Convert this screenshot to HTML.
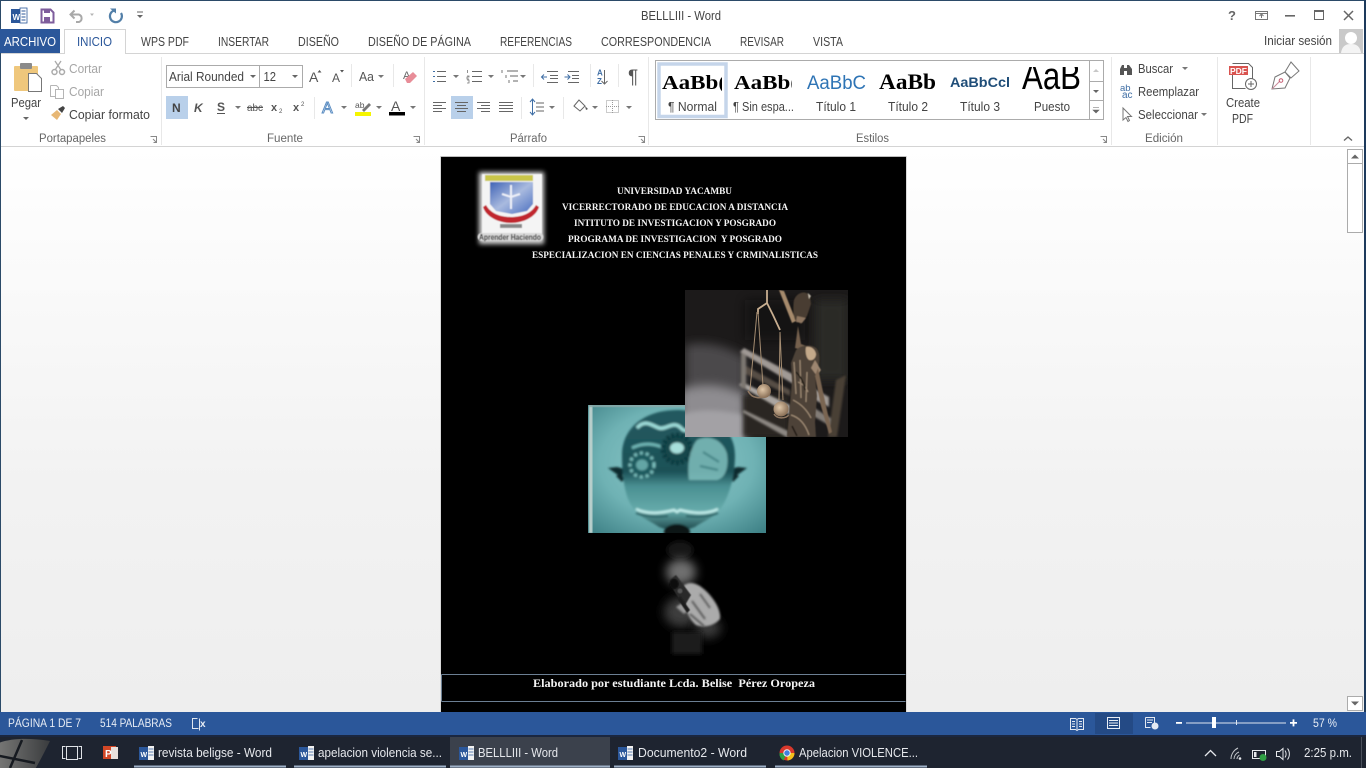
<!DOCTYPE html>
<html lang="es"><head><meta charset="utf-8"><title>BELLLIII - Word</title>
<style>
html,body{margin:0;padding:0;background:#fff;overflow:hidden}
svg.m{display:block;position:absolute;left:0;top:0;filter:blur(.3px)}
text{font-family:"Liberation Sans",sans-serif;font-size:12.5px;fill:#555;white-space:pre}
.t{fill:#444}.g{fill:#a6a6a6}.l{fill:#666;font-size:11.5px}.w{fill:#e8edf5;font-size:11.5px}
.b{fill:#e6e8ec;font-size:12.5px}
.d{font-family:"Liberation Serif",serif;font-weight:bold;fill:#f4f4f4;font-size:9.5px}
.i{fill:none;stroke:#666;stroke-width:1}
</style></head><body>
<svg class="m" width="1366" height="768" viewBox="0 0 1366 768" xmlns="http://www.w3.org/2000/svg">
<defs>
<linearGradient id="bg" x1="0" y1="0" x2="0" y2="1"><stop offset="0" stop-color="#fff"/><stop offset=".6" stop-color="#f2f2f2"/><stop offset="1" stop-color="#eeeeee"/></linearGradient>
<radialGradient id="teal" cx=".5" cy=".45" r=".72"><stop offset="0" stop-color="#8fcacb"/><stop offset=".6" stop-color="#6fb2b4"/><stop offset="1" stop-color="#3f8287"/></radialGradient>
<linearGradient id="head" x1="0" y1="0" x2="0" y2="1"><stop offset="0" stop-color="#235a60"/><stop offset=".5" stop-color="#1c5157"/><stop offset=".62" stop-color="#4a9092"/><stop offset=".82" stop-color="#66abab"/><stop offset="1" stop-color="#12393d"/></linearGradient>
<radialGradient id="ball" cx=".4" cy=".4" r=".6"><stop offset="0" stop-color="#e0c7a8"/><stop offset="1" stop-color="#8b7158"/></radialGradient>
<linearGradient id="orb" x1="0" y1="0" x2="1" y2="0"><stop offset="0" stop-color="#7c7c7a"/><stop offset="1" stop-color="#3a3c3e"/></linearGradient>
<linearGradient id="shield" x1="0" y1="0" x2="1" y2="1"><stop offset="0" stop-color="#3f63b5"/><stop offset=".5" stop-color="#a9badf"/><stop offset="1" stop-color="#4a6fc0"/></linearGradient>
<filter id="b1" x="-20%" y="-20%" width="140%" height="140%"><feGaussianBlur stdDeviation="1"/></filter>
<filter id="b2" x="-30%" y="-30%" width="160%" height="160%"><feGaussianBlur stdDeviation="2.5"/></filter>
<filter id="b3" x="-40%" y="-40%" width="180%" height="180%"><feGaussianBlur stdDeviation="5"/></filter>
<filter id="b4" x="-50%" y="-50%" width="200%" height="200%"><feGaussianBlur stdDeviation="9"/></filter>
<filter id="b05" x="-10%" y="-10%" width="120%" height="120%"><feGaussianBlur stdDeviation=".6"/></filter>
<clipPath id="jc"><rect x="685" y="290" width="163" height="147"/></clipPath>
<clipPath id="bc"><rect x="588" y="405" width="178" height="128"/></clipPath>
<clipPath id="tn"><rect x="660" y="66" width="62" height="30"/></clipPath>
<clipPath id="ts"><rect x="732" y="66" width="60" height="30"/></clipPath>
<clipPath id="tp"><rect x="1015" y="67" width="70" height="30"/></clipPath>
<clipPath id="orbc"><rect x="0" y="737" width="52" height="31"/></clipPath>
</defs>

<!-- chrome -->
<rect width="1366" height="768" fill="#fff"/>
<rect width="1366" height="1" fill="#2b4a68"/>
<rect x="0" y="0" width="1" height="735" fill="#2b4a68"/>
<rect x="1364" y="0" width="2" height="735" fill="#1d3a5c"/>
<rect x="1" y="53" width="1363" height="93" fill="#fff"/>
<rect x="1" y="146" width="1363" height="1" fill="#d4d4d4"/>
<rect x="1" y="147" width="1363" height="565" fill="url(#bg)"/>

<!-- QAT -->
<rect x="11" y="9" width="12" height="14" fill="#2b579a"/><rect x="20" y="8" width="7" height="15" fill="#fff" stroke="#2b579a" stroke-width=".8"/>
<path d="M21.5 11h4M21.5 14h4M21.5 17h4M21.5 20h4" stroke="#2b579a" stroke-width="1"/>
<text x="12.5" y="20" style="font-size:8px;font-weight:bold;fill:#fff">W</text>
<path d="M41.5 9.5h9l3 3v10h-12z" fill="#fff" stroke="#7e5d9c" stroke-width="2"/><rect x="44" y="9" width="6" height="4" fill="#7e5d9c"/><rect x="44" y="17" width="6" height="5" fill="#7e5d9c"/>
<path d="M71 14.5h8a4 4 0 0 1 0 7.5h-3M74.5 10.5l-4 4 4 4" fill="none" stroke="#a9a9a9" stroke-width="2"/>
<path d="M90 13.5l4 0-2 2.5z" fill="#b5b5b5"/>
<path d="M114 10.5a6 6 0 1 0 7 2.5" fill="none" stroke="#527fa8" stroke-width="2.2"/><path d="M110 8.5l6 0 0 5z" fill="#527fa8"/>
<path d="M137 12h6" stroke="#666"/><path d="M137 15l6 0-3 3z" fill="#666"/>
<text x="641" y="20" textLength="80" lengthAdjust="spacingAndGlyphs" style="fill:#444">BELLLIII - Word</text>
<!-- window controls -->
<text x="1228" y="20" style="font-weight:bold;font-size:13px;fill:#666">?</text>
<rect x="1255.5" y="11.5" width="12" height="8" fill="none" stroke="#777"/><path d="M1255 13.5h13M1261.5 18v-3M1259.5 16l2-2 2 2" fill="none" stroke="#777"/>
<rect x="1285" y="15" width="10" height="1.6" fill="#666"/>
<rect x="1314.5" y="10.5" width="9" height="9" fill="none" stroke="#666"/><rect x="1314" y="10" width="10" height="2" fill="#666"/>
<path d="M1344 11l9 9M1353 11l-9 9" stroke="#666" stroke-width="1.5"/>

<!-- tabs -->
<rect x="0" y="29" width="60" height="24" fill="#2b579a"/>
<text x="4" y="46" textLength="52" lengthAdjust="spacingAndGlyphs" style="fill:#fff">ARCHIVO</text>
<path d="M1 53.5h63.5v-24h61v24H1364" fill="#fff" stroke="#d4d4d4"/>
<text x="77" y="46" textLength="35" lengthAdjust="spacingAndGlyphs" style="fill:#2b579a">INICIO</text>
<text class="t" x="141" y="46" textLength="48" lengthAdjust="spacingAndGlyphs">WPS PDF</text>
<text class="t" x="218" y="46" textLength="51" lengthAdjust="spacingAndGlyphs">INSERTAR</text>
<text class="t" x="298" y="46" textLength="41" lengthAdjust="spacingAndGlyphs">DISEÑO</text>
<text class="t" x="368" y="46" textLength="103" lengthAdjust="spacingAndGlyphs">DISEÑO DE PÁGINA</text>
<text class="t" x="500" y="46" textLength="72" lengthAdjust="spacingAndGlyphs">REFERENCIAS</text>
<text class="t" x="601" y="46" textLength="110" lengthAdjust="spacingAndGlyphs">CORRESPONDENCIA</text>
<text class="t" x="740" y="46" textLength="44" lengthAdjust="spacingAndGlyphs">REVISAR</text>
<text class="t" x="813" y="46" textLength="30" lengthAdjust="spacingAndGlyphs">VISTA</text>
<text class="t" x="1264" y="45" textLength="68" lengthAdjust="spacingAndGlyphs">Iniciar sesión</text>
<rect x="1339" y="29" width="24" height="24" fill="#c9c9c9"/><circle cx="1351" cy="38" r="6" fill="#fff"/><path d="M1341 53c1-7 5-9 10-9s9 2 10 9z" fill="#f4f4f4"/>

<!-- group separators -->
<path d="M161.5 57v88M424.5 57v88M648.5 57v88M1111.5 57v88M1217.5 57v88M1310.5 57v88" stroke="#e8e8e8"/>

<!-- clipboard -->
<rect x="14" y="66" width="24" height="25" rx="1" fill="#efc77c"/><rect x="20" y="63" width="12" height="6" rx="1" fill="#8a8a8a"/>
<path d="M28.5 73.5h8l5 5v13h-13z" fill="#fff" stroke="#777"/>
<text x="11" y="107" textLength="30" lengthAdjust="spacingAndGlyphs" class="t">Pegar</text>
<path d="M23 117h6l-3 3z" fill="#666"/>
<circle cx="54.5" cy="72" r="2.5" fill="none" stroke="#aaa" stroke-width="1.5"/><circle cx="62" cy="72" r="2.5" fill="none" stroke="#aaa" stroke-width="1.5"/><path d="M55 70l6-9M61 70l-6-9" stroke="#aaa" stroke-width="1.3"/>
<text class="g" x="69" y="73" textLength="33" lengthAdjust="spacingAndGlyphs">Cortar</text>
<path d="M50.5 85.5h6l2 2v3M50.5 85.5v11h5" fill="none" stroke="#b5b5b5"/><rect x="55.5" y="89.5" width="8" height="9" fill="#fff" stroke="#b5b5b5"/>
<text class="g" x="69" y="96" textLength="35" lengthAdjust="spacingAndGlyphs">Copiar</text>
<path d="M51 115l6-5 4 4-4 6z" fill="#e7b775"/><path d="M58 109l5-3 2 2-3 5z" fill="#444"/>
<text class="t" x="69" y="119" textLength="81" lengthAdjust="spacingAndGlyphs">Copiar formato</text>
<text class="l" x="39" y="142" textLength="67" lengthAdjust="spacingAndGlyphs">Portapapeles</text>
<path d="M150.5 136.5h6v6h-3M153 139l3.5 3.5" fill="none" stroke="#888"/>

<!-- font -->
<rect x="166.5" y="65.5" width="93" height="22" fill="#fff" stroke="#ababab"/><rect x="259.5" y="65.5" width="43" height="22" fill="#fff" stroke="#ababab"/>
<text class="t" x="169" y="81" textLength="75" lengthAdjust="spacingAndGlyphs">Arial Rounded</text>
<path d="M250 75h6l-3 3z" fill="#666"/>
<text class="t" x="263.5" y="81" textLength="12.5" lengthAdjust="spacingAndGlyphs">12</text>
<path d="M292 75h6l-3 3z" fill="#666"/>
<text x="309" y="82" style="font-size:14px;fill:#555">A</text><path d="M317.5 72.5l2-2.5 2 2.5z" fill="#555"/>
<text x="332" y="82" style="font-size:12px;fill:#555">A</text><path d="M340 70h4l-2 2.5z" fill="#555"/>
<path d="M351.5 64v23" stroke="#e8e8e8"/>
<text x="359" y="81" textLength="15" lengthAdjust="spacingAndGlyphs" style="font-size:13px;fill:#555">Aa</text><path d="M378 75h6l-3 3z" fill="#777"/>
<path d="M393.5 64v23" stroke="#e8e8e8"/>
<text x="403" y="79" style="font-size:11px;fill:#666">A</text><path d="M405 79l8-7 4 4-7 7h-3z" fill="#e88d98"/>

<rect x="166" y="96" width="22" height="23" fill="#b9d0ea"/>
<text x="172" y="112" style="font-weight:bold;font-size:12px;fill:#444">N</text>
<text x="194" y="112" style="font-weight:bold;font-style:italic;font-size:12px;fill:#555">K</text>
<text x="217" y="111" style="font-weight:bold;font-size:12px;fill:#555">S</text><rect x="217" y="113" width="8" height="1" fill="#555"/>
<path d="M235 106h6l-3 3z" fill="#777"/>
<text x="247" y="111" textLength="16" lengthAdjust="spacingAndGlyphs" style="font-size:10.5px;fill:#555">abc</text><rect x="247" y="107" width="16" height="1" fill="#555"/>
<text x="271" y="111" style="font-size:11px;font-weight:bold;fill:#555">x</text><text x="279" y="113" style="font-size:6px;fill:#555">2</text>
<text x="293" y="111" style="font-size:11px;font-weight:bold;fill:#555">x</text><text x="301" y="106" style="font-size:6px;fill:#555">2</text>
<path d="M314.5 97v22" stroke="#e8e8e8"/>
<text x="322" y="113" style="font-size:16px;fill:#fff;stroke:#5b8dc2;stroke-width:1">A</text><path d="M341 106h6l-3 3z" fill="#777"/>
<text x="355" y="108" style="font-size:8.5px;fill:#555">ab</text><path d="M362 110l7-7 2 2-7 7z" fill="#777"/><rect x="355" y="112" width="16" height="4" fill="#f5f500"/>
<path d="M376 106h6l-3 3z" fill="#777"/>
<text x="391" y="111" style="font-size:14px;fill:#555">A</text><rect x="389" y="112" width="16" height="3.5" fill="#000"/>
<path d="M410 106h6l-3 3z" fill="#777"/>
<text class="l" x="267" y="142" textLength="36" lengthAdjust="spacingAndGlyphs">Fuente</text>
<path d="M413.500 136.500h6v6h-3M416 139l3.500 3.500" fill="none" stroke="#888"/>

<!-- paragraph -->
<g stroke="#666" fill="none">
<path d="M437 71.500h9M437 76.500h9M437 81.500h9"/><path d="M433 71.500h2M433 76.500h2M433 81.500h2" stroke="#3f6ea5"/>
<path d="M472 71.500h10M472 76.500h10M472 81.500h10"/><path d="M467.500 70v3M467 76h2v1h-2v2h2M467 80h2v3h-2" stroke="#777" stroke-width=".8"/>
<path d="M507 71h11M510 76h8M513 81h5"/><path d="M502 70v3M506 75v3M509 80v3" stroke="#777"/>
<path d="M547 71.500h11M550 75.500h8M550 78.500h8M547 82.500h11"/><path d="M568 71.500h11M572 75.500h7M572 78.500h7M568 82.500h11"/>
<path d="M604.500 70v14M601.500 81l3 3 3-3"/>
</g>
<path d="M547 77h-5m2-2.500l-2.500 2.500 2.500 2.500" fill="none" stroke="#3f6ea5"/><path d="M564.500 77h5m-2-2.500l2.500 2.500-2.500 2.500" fill="none" stroke="#3f6ea5"/>
<path d="M453 75h6l-3 3zM488 75h6l-3 3zM520 75h6l-3 3z" fill="#777"/>
<path d="M533.500 64v23M590.500 64v23M618.500 64v23" stroke="#e8e8e8"/>
<text x="597" y="75.500" style="font-size:8px;font-weight:bold;fill:#3f6ea5">A</text><text x="597" y="84" style="font-size:8px;font-weight:bold;fill:#3f6ea5">Z</text>
<text x="628" y="83" style="font-size:19px;fill:#555">¶</text>
<g fill="none" stroke="#666">
<path d="M433 102.500h13M433 105.500h9M433 108.500h13M433 111.500h9"/>
</g>
<rect x="451" y="96" width="22" height="23" fill="#b9d0ea"/>
<g fill="none" stroke="#666">
<path d="M455 102.500h13M457 105.500h9M455 108.500h13M457 111.500h9"/>
<path d="M477 102.500h13M481 105.500h9M477 108.500h13M481 111.500h9"/>
<path d="M499 102.500h14M499 105.500h14M499 108.500h14M499 111.500h14"/>
<path d="M521.500 97v22M563.500 97v22" stroke="#e8e8e8"/>
<path d="M536 103h8M536 107h8M536 111h8"/>
</g>
<path d="M532.500 100v14" stroke="#3f6ea5"/><path d="M530 102l2.500-3 2.500 3M530 112l2.500 3 2.500-3" fill="none" stroke="#3f6ea5"/>
<path d="M549 106h6l-3 3z" fill="#777"/>
<path d="M574 106l5-6 6 6-5 5z" fill="#fff" stroke="#666"/><path d="M585 106l3 3-2 1z" fill="#555"/>
<path d="M592 106h6l-3 3z" fill="#777"/>
<rect x="606.500" y="100.500" width="12" height="12" fill="none" stroke="#999" stroke-dasharray="1 1"/><path d="M612.500 100v13M606 106.500h13" stroke="#999" stroke-dasharray="1 1"/>
<path d="M626 106h6l-3 3z" fill="#777"/>
<text class="l" x="510" y="142" textLength="37" lengthAdjust="spacingAndGlyphs">Párrafo</text>
<path d="M638.500 136.500h6v6h-3M641 139l3.500 3.500" fill="none" stroke="#888"/>

<!-- styles -->
<rect x="655.500" y="60.500" width="448" height="59" fill="#fff" stroke="#ababab"/>
<rect x="659" y="64" width="67" height="52.500" fill="#fff" stroke="#c5d5ea" stroke-width="3.500"/>
<g clip-path="url(#tn)"><text x="662" y="89" textLength="64" lengthAdjust="spacingAndGlyphs" style="font-family:'Liberation Serif',serif;font-weight:bold;font-size:20px;fill:#000">AaBb(</text></g>
<g clip-path="url(#ts)"><text x="734" y="89" textLength="64" lengthAdjust="spacingAndGlyphs" style="font-family:'Liberation Serif',serif;font-weight:bold;font-size:20px;fill:#000">AaBb(</text></g>
<text x="807" y="89" textLength="59" lengthAdjust="spacingAndGlyphs" style="font-size:19px;fill:#2e74b5">AaBbC</text>
<text x="879" y="89" textLength="57" lengthAdjust="spacingAndGlyphs" style="font-family:'Liberation Serif',serif;font-weight:bold;font-size:22px;fill:#000">AaBb</text>
<text x="950" y="87" textLength="60" lengthAdjust="spacingAndGlyphs" style="font-size:14px;font-weight:bold;fill:#1f4d78">AaBbCcl</text>
<g clip-path="url(#tp)"><text x="1022" y="89" textLength="59" lengthAdjust="spacingAndGlyphs" style="font-size:38px;fill:#000">AaB</text></g>
<text class="t" x="668" y="111" textLength="49" lengthAdjust="spacingAndGlyphs">¶ Normal</text>
<text class="t" x="733" y="111" textLength="61" lengthAdjust="spacingAndGlyphs">¶ Sin espa...</text>
<text class="t" x="816" y="111" textLength="40" lengthAdjust="spacingAndGlyphs">Título 1</text>
<text class="t" x="888" y="111" textLength="40" lengthAdjust="spacingAndGlyphs">Título 2</text>
<text class="t" x="960" y="111" textLength="40" lengthAdjust="spacingAndGlyphs">Título 3</text>
<text class="t" x="1034" y="111" textLength="36" lengthAdjust="spacingAndGlyphs">Puesto</text>
<path d="M1089.500 60v60M1089.500 81.500h14M1089.500 100.500h14" stroke="#ababab" fill="none"/>
<path d="M1093 72l3-3 3 3z" fill="#c8c8c8"/><path d="M1093 90h6l-3 3z" fill="#666"/><path d="M1093 107.500h6M1093 110h6l-3 3z" fill="#666" stroke="#666" stroke-width=".6"/>
<text class="l" x="856" y="142" textLength="33" lengthAdjust="spacingAndGlyphs">Estilos</text>
<path d="M1100.500 136.500h6v6h-3M1103 139l3.500 3.500" fill="none" stroke="#888"/>

<!-- editing -->
<path d="M1120 75v-6l2-4h2v10zM1127 75v-10h2l3 4v6zM1124 68h3v3h-3z" fill="#555"/>
<text class="t" x="1138" y="73" textLength="35" lengthAdjust="spacingAndGlyphs">Buscar</text><path d="M1182 67h6l-3 3z" fill="#777"/>
<text x="1120" y="91" style="font-size:9.500px;fill:#3f6ea5">ab</text><text x="1122" y="98" style="font-size:10px;fill:#3f6ea5">ac</text>
<text class="t" x="1138" y="96" textLength="61" lengthAdjust="spacingAndGlyphs">Reemplazar</text>
<path d="M1123 108v12l3-2.500 2 4 1.500-1-2-4h4z" fill="#fff" stroke="#777"/>
<text class="t" x="1138" y="119" textLength="60" lengthAdjust="spacingAndGlyphs">Seleccionar</text><path d="M1201 113h6l-3 3z" fill="#777"/>
<text class="l" x="1145" y="142" textLength="38" lengthAdjust="spacingAndGlyphs">Edición</text>

<!-- PDF -->
<path d="M1232.500 63.500h16l4 4v15M1232.500 75v13.500h13" fill="none" stroke="#666"/>
<rect x="1229" y="66" width="19" height="9" fill="#d9534f"/><text x="1230" y="74" style="font-size:8px;fill:#fff;font-weight:bold" textLength="17" lengthAdjust="spacingAndGlyphs">PDF</text>
<circle cx="1251" cy="84" r="5.500" fill="#fff" stroke="#666"/><path d="M1251 81v6M1248 84h6" stroke="#666"/>
<text class="t" x="1226" y="107" textLength="34" lengthAdjust="spacingAndGlyphs">Create</text>
<text class="t" x="1232" y="123" textLength="21" lengthAdjust="spacingAndGlyphs">PDF</text>
<path d="M1272 89l3-12 10-5 5 6-5 10z" fill="#fff" stroke="#777"/><path d="M1285 72l6-10 8 9-8 7z" fill="#fff" stroke="#777"/>
<path d="M1272 89l8-8" stroke="#c98a9a"/><circle cx="1281" cy="80.500" r="1.800" fill="none" stroke="#c55a70"/>
<path d="M1344 140.500l4-3.500 4 3.500" fill="none" stroke="#666" stroke-width="1.400"/>

<!-- scrollbar -->
<rect x="1347.500" y="149.500" width="15" height="14" fill="#fff" stroke="#ababab"/>
<path d="M1351 158.500l4-4 4 4z" fill="#666"/>
<rect x="1347.500" y="163.500" width="15" height="69" fill="#fff" stroke="#ababab"/>
<rect x="1347.500" y="696.500" width="15" height="14" fill="#fff" stroke="#ababab"/>
<path d="M1351 701.500h8l-4 4z" fill="#666"/>

<!-- page -->
<rect x="440" y="156" width="467" height="1" fill="#bdbdbd"/>
<rect x="440" y="156" width="1" height="556" fill="#d9d9d9"/><rect x="906" y="156" width="1" height="556" fill="#d9d9d9"/>
<rect x="441" y="157" width="465" height="555" fill="#000"/>

<!-- logo -->
<g filter="url(#b05)">
<rect x="479" y="172" width="65" height="72" fill="#fff" filter="url(#b2)" opacity=".85"/>
<rect x="482" y="174" width="60" height="66" fill="#f4f4f4"/>
<rect x="485" y="175" width="48" height="6" fill="#c9c64a"/>
<path d="M490 182h43v22l-6 7-15 3-16-3-6-7z" fill="url(#shield)"/>
<path d="M511 185v24M502 194l9 3 9-3" stroke="#eef0f8" stroke-width="2" fill="none"/>
<path d="M483 207c3 10 16 16 28 16s25-6 28-16l-3-2c-5 9-15 12-25 12s-20-3-25-12z" fill="#c1272d"/>
<rect x="500" y="224" width="22" height="4" fill="#888"/>
<rect x="477.500" y="233" width="66" height="8" rx="4" fill="#d8d8d8"/>
<text x="479" y="240" textLength="62" lengthAdjust="spacingAndGlyphs" style="font-size:8px;font-weight:bold;fill:#222">Aprender Haciendo</text>
</g>

<!-- header text -->
<text class="d" x="617" y="194" textLength="115" lengthAdjust="spacingAndGlyphs">UNIVERSIDAD YACAMBU</text>
<text class="d" x="562" y="210" textLength="226" lengthAdjust="spacingAndGlyphs">VICERRECTORADO DE EDUCACION A DISTANCIA</text>
<text class="d" x="574" y="226" textLength="202" lengthAdjust="spacingAndGlyphs">INTITUTO DE INVESTIGACION Y POSGRADO</text>
<text class="d" x="568" y="242" textLength="214" lengthAdjust="spacingAndGlyphs">PROGRAMA DE INVESTIGACION  Y POSGRADO</text>
<text class="d" x="532" y="258" textLength="286" lengthAdjust="spacingAndGlyphs">ESPECIALIZACION EN CIENCIAS PENALES Y CRMINALISTICAS</text>

<!-- brain -->
<g clip-path="url(#bc)">
<rect x="588" y="405" width="178" height="128" fill="url(#teal)"/>
<rect x="589" y="405" width="3.500" height="128" fill="#b9cfcc" filter="url(#b05)"/>
<rect x="589" y="405" width="177" height="2" fill="#8aa9a8" filter="url(#b05)"/>
<g filter="url(#b1)">
<path d="M622 478l-14-10 9-1 7 2zM733 478l14-10-9-1-7 2z" fill="#0e2a2e"/>
<path d="M622 482l-6-6 4-2 5 4zM733 482l6-6-4-2-5 4z" fill="#0e2a2e"/>
<path d="M622 455c0-28 24-45 55-45s58 17 58 45c0 22-6 40-12 50-6 12-20 16-28 22l-18 6-18-6c-8-6-22-10-28-22-6-10-9-28-9-50z" fill="url(#head)"/>
<path d="M637 428c8-9 14-3 22 0 8 2 14-8 22 0 6 8 16-6 26 3" fill="none" stroke="#9ddbd8" stroke-width="3.500"/>
<path d="M632 448c12-6 22-4 30-1" fill="none" stroke="#6fb6b5" stroke-width="3"/>
<circle cx="677" cy="449" r="14" fill="#13474c" stroke="#0f3a3f" stroke-width="5" stroke-dasharray="3 2"/>
<ellipse cx="677" cy="448" rx="7" ry="5.500" fill="#a7dfdb"/>
<circle cx="642" cy="465" r="12" fill="#1f5a5e" stroke="#7cc0be" stroke-width="3" stroke-dasharray="3 3"/>
<ellipse cx="642" cy="465" rx="6" ry="5.500" fill="#64a5a5"/>
<path d="M697 440c12-6 26 0 30 14 2 14-2 24-10 26h-28c-2-14 0-30 8-40z" fill="#86c5c3" opacity=".8"/>
<path d="M703 452l16 10M700 466l18 4" stroke="#2e6d70" stroke-width="2" opacity=".7"/>
<path d="M636 509c12 6 26 4 38 1l3 2 3-2c12 3 26 5 38-1" fill="none" stroke="#c4efec" stroke-width="2.500"/>
<path d="M636 513c12 5 24 4 32 3M718 513c-12 5-24 4-32 3" fill="none" stroke="#1b4f53" stroke-width="1.500"/>
<ellipse cx="677" cy="532" rx="13" ry="8" fill="#0a1517"/>
</g>
</g>

<!-- gun -->
<g>
<ellipse cx="680" cy="550" rx="13" ry="9" fill="#141414" filter="url(#b2)"/>
<ellipse cx="681" cy="572" rx="15" ry="13" fill="#707070" filter="url(#b3)"/>
<ellipse cx="681" cy="612" rx="17" ry="15" fill="#3c3c3c" filter="url(#b3)"/>
<ellipse cx="708" cy="628" rx="13" ry="10" fill="#3a3a3a" filter="url(#b3)"/>
<rect x="672" y="632" width="30" height="22" fill="#1a1a1a" filter="url(#b2)"/>
<g filter="url(#b1)">
<path d="M683 586c8-7 18-1 26 8 8 9 12 18 11 25-6 7-16 9-24 6-9-7-14-24-13-39z" fill="#ababab"/>
<path d="M676 607l8 7 4-3-6-8z" fill="#9a9a9a"/>
</g>
<path d="M700 594l10 14M692 601l13 18M690 614l14 12" stroke="#444" stroke-width="1.500" filter="url(#b1)"/>
<path d="M668 581l8-6 15 20-7 12z" fill="#2b2b2b" filter="url(#b05)"/>
<path d="M680 596l10 14-3 3-9-14z" fill="#1d1d1d" filter="url(#b05)"/>
<ellipse cx="674" cy="584" rx="4.500" ry="5" fill="#070707" filter="url(#b05)"/>
<circle cx="680" cy="591" r="2.500" fill="#555" filter="url(#b05)"/>
</g>

<!-- justice -->
<g clip-path="url(#jc)">
<rect x="685" y="290" width="163" height="147" fill="#1c1a1a"/>
<path d="M685 345c20-4 40 0 60 12v80h-60z" fill="#4c4a4c" filter="url(#b3)"/>
<path d="M680 390c24-8 40-6 65 4l2 50h-67z" fill="#8e8c90" filter="url(#b3)"/>
<path d="M680 415c24-8 44-4 65 0v30h-65z" fill="#a3a1a5" filter="url(#b2)"/>
<rect x="745" y="300" width="60" height="40" fill="#111" opacity=".5" filter="url(#b3)"/>
<rect x="815" y="300" width="33" height="80" fill="#2c2926" filter="url(#b3)"/>
<!-- books -->
<path d="M743 395h45v42h-45z" fill="#2b2623" filter="url(#b2)"/>
<g filter="url(#b1)">
<path d="M740 352l4-4 56 30v10z" fill="#a09a95"/>
<path d="M739 385l3-3 48 23v10z" fill="#aba6a1"/>
<path d="M742 412l2-2 44 21v7z" fill="#8c8782"/>
<path d="M741 352v36l5 1v-34z" fill="#7d7771"/>
<path d="M746 366l44 24v6l-44-22z" fill="#564d45"/>
<path d="M809 386l20 11v10l-20-10z" fill="#a09a95"/>
<path d="M808 404l24 15v8l-24-14z" fill="#837d77"/>
<path d="M836 380l-8 57h9l9-62z" fill="#4a4036"/>
</g>
<!-- scale -->
<path d="M767 290v13M767 303l-9 6 0 5M767 303l6 12 7 15" fill="none" stroke="#c8ae90" stroke-width="1.800"/>
<path d="M758 312l5 74M757 312l-7 78M780 332l-1 68M780 332l3 68" fill="none" stroke="#a58d72" stroke-width="1"/>
<path d="M748 391c4 8 14 9 20 2" fill="none" stroke="#8e7660" stroke-width="1.500"/>
<circle cx="764" cy="391" r="7" fill="url(#ball)"/>
<circle cx="781" cy="409" r="7.500" fill="url(#ball)"/>
<path d="M774 414c3 5 11 5 15 1" fill="none" stroke="#8e7660" stroke-width="1.500"/>
<!-- statue -->
<g filter="url(#b05)">
<path d="M779 290l5 1 12 30-4 2z" fill="#a68a6c"/>
<path d="M794 300c3-8 12-10 16-4l1 8-4 12-6 8-6-4c-2-6-2-14-1-20z" fill="#4a3d31"/>
<path d="M808 293l3 3-2 3z" fill="#c8c0b0"/>
<path d="M797 316l9 2-4 5-6-1z" fill="#8e7660"/>
<path d="M798 326l3 18 8 3-7 3-7-2z" fill="#75614e"/>
<path d="M796 350c5-5 15-6 20-2 4 4 4 12 2 20l-3 8 2 20-2 26 1 15h-29l3-32 2-24-1-18z" fill="#4e4237"/>
<path d="M806 347c5-1 9 2 10 7 0 4-3 7-7 6-3-2-4-9-3-13z" fill="#c4a98a"/>
<path d="M815 360l6 10-4 6-6-8z" fill="#9d8670"/>
<path d="M818 368l8 38 6 26-3 2-8-28-6-30z" fill="#7a6551"/>
<path d="M794 362l2 32M800 360l1 38M807 372l-1 30M793 400c8 4 14 10 18 18M791 415c7 2 14 8 18 20M798 382c5 2 8 5 10 10" fill="none" stroke="#9e8a74" stroke-width="1.200"/>
<path d="M796 372c4 4 8 10 9 18M792 426l5 10" fill="none" stroke="#1f1a15" stroke-width="1.500"/>
</g>
</g>

<!-- footer table -->
<path d="M441.500 674.500h464M441.500 701.500h464M441.500 674.500v27" stroke="#6c7f93" fill="none"/>
<text class="d" x="533" y="687" textLength="282" lengthAdjust="spacingAndGlyphs" style="font-size:12px">Elaborado por estudiante Lcda. Belise  Pérez Oropeza</text>

<!-- status bar -->
<rect x="0" y="712" width="1366" height="23" fill="#2b579a"/>
<text class="w" x="8" y="727" textLength="73" lengthAdjust="spacingAndGlyphs">PÁGINA 1 DE 7</text>
<text class="w" x="100" y="727" textLength="72" lengthAdjust="spacingAndGlyphs">514 PALABRAS</text>
<path d="M197.500 718.500h-5v10h6M199.500 718.500v12" fill="none" stroke="#dfe6f0"/>
<text x="200" y="727" style="font-size:10px;font-weight:bold;fill:#e8edf5">x</text>
<path d="M1070.500 718.500h5l1.500 1 1.500-1h5v11h-5l-1.500 1-1.500-1h-5zM1077 719.500v10M1072 721.500h3M1072 724h3M1072 726.500h3M1079 721.500h3M1079 724h3M1079 726.500h3" fill="none" stroke="#e4e9f2"/>
<rect x="1095" y="713" width="38" height="21" fill="#244a85"/>
<rect x="1107.500" y="717.500" width="12" height="11" fill="none" stroke="#e8edf5"/><path d="M1109 720.500h9M1109 723h9M1109 725.500h9" stroke="#e8edf5"/>
<path d="M1145.500 717.500h9v6M1145.500 717.500v10h5M1147 720h6M1147 722.500h5" fill="none" stroke="#e4e9f2"/><circle cx="1155" cy="726" r="3.500" fill="#e4e9f2"/>
<rect x="1176" y="722" width="6" height="1.800" fill="#fff"/>
<rect x="1186" y="722.500" width="100" height="1" fill="#dfe6f0"/><rect x="1236" y="720" width="1" height="5" fill="#dfe6f0"/>
<rect x="1212" y="717" width="4" height="11" fill="#fff"/>
<path d="M1290 722.900h7M1293.500 719.400v7" stroke="#fff" stroke-width="1.800"/>
<text class="w" x="1313" y="727" textLength="24" lengthAdjust="spacingAndGlyphs">57 %</text>

<!-- taskbar -->
<rect x="0" y="735" width="1366" height="33" fill="#1e2430"/>
<rect x="0" y="735" width="1366" height="2" fill="#1b2740"/>
<g clip-path="url(#orbc)">
<path d="M-6 745c12-6 30-8 56-4-5 10-10 20-16 30H-6z" fill="url(#orb)"/>
<path d="M22 740L10 768M-5 755l40 8" stroke="#161a20" stroke-width="2.500"/>
</g>
<path d="M65.500 746.500h-3v12h3M78.500 746.500h3v12h-3" fill="none" stroke="#dfe2e6"/><rect x="66.500" y="746.500" width="11" height="13" fill="none" stroke="#dfe2e6"/>
<rect x="103" y="746" width="13" height="13" fill="#d24726"/><rect x="111" y="747" width="7" height="12" fill="#e8e0dc"/>
<text x="105" y="757" style="font-size:10px;font-weight:bold;fill:#fff">P</text>

<rect x="450" y="737" width="160" height="31" fill="#3b414c"/>
<path d="M134 766.500h152M294 766.500h152M450 766.500h160M614 766.500h152M775 766.500h152" stroke="#9fb1c7" stroke-width="2" fill="none"/>

<rect x="139" y="747" width="11" height="13" fill="#2b579a"/><rect x="148" y="746" width="6" height="14" fill="#f2f2f2"/><path d="M148.500 749h5M148.500 752h5M148.500 755h5" stroke="#2b579a" stroke-width=".8"/><text x="140.500" y="757" style="font-size:7px;font-weight:bold;fill:#fff">W</text>
<text class="b" x="158" y="757" textLength="114" lengthAdjust="spacingAndGlyphs">revista beligse - Word</text>
<rect x="299" y="747" width="11" height="13" fill="#2b579a"/><rect x="308" y="746" width="6" height="14" fill="#f2f2f2"/><path d="M308.500 749h5M308.500 752h5M308.500 755h5" stroke="#2b579a" stroke-width=".8"/><text x="300.500" y="757" style="font-size:7px;font-weight:bold;fill:#fff">W</text>
<text class="b" x="318" y="757" textLength="124" lengthAdjust="spacingAndGlyphs">apelacion violencia se...</text>
<rect x="459" y="747" width="11" height="13" fill="#2b579a"/><rect x="468" y="746" width="6" height="14" fill="#f2f2f2"/><path d="M468.500 749h5M468.500 752h5M468.500 755h5" stroke="#2b579a" stroke-width=".8"/><text x="460.500" y="757" style="font-size:7px;font-weight:bold;fill:#fff">W</text>
<text class="b" x="478" y="757" textLength="80" lengthAdjust="spacingAndGlyphs">BELLLIII - Word</text>
<rect x="618" y="747" width="11" height="13" fill="#2b579a"/><rect x="627" y="746" width="6" height="14" fill="#f2f2f2"/><path d="M627.500 749h5M627.500 752h5M627.500 755h5" stroke="#2b579a" stroke-width=".8"/><text x="619.500" y="757" style="font-size:7px;font-weight:bold;fill:#fff">W</text>
<text class="b" x="638" y="757" textLength="109" lengthAdjust="spacingAndGlyphs">Documento2 - Word</text>
<circle cx="787" cy="753" r="7.500" fill="#d8382c"/><path d="M787 753l-3.500 7.500a7.500 7.500 0 0 1-4-7.500z" fill="#2f9e44"/><path d="M787 753h7.500a7.500 7.500 0 0 1-7 7.500z" fill="#f3c01a"/><circle cx="787" cy="753" r="3.200" fill="#3f7fe0" stroke="#eee" stroke-width="1"/>
<text class="b" x="799" y="757" textLength="119" lengthAdjust="spacingAndGlyphs">Apelacion VIOLENCE...</text>

<!-- tray -->
<path d="M1205 756l5.500-5.500 5.500 5.500" fill="none" stroke="#e6e8ec" stroke-width="1.300"/>
<path d="M1231 759c0-5 3-9 7-11M1234 759c0-3 2-6 5-7M1237 759c0-2 1-3 2.500-4" fill="none" stroke="#c4c7cc"/><circle cx="1240" cy="758.500" r="1.300" fill="#e6e8ec"/>
<rect x="1252.500" y="750.500" width="13" height="8" fill="none" stroke="#e6e8ec"/><rect x="1254" y="752" width="2.500" height="5" fill="#e6e8ec"/><circle cx="1263" cy="757.500" r="3.500" fill="#2f9e44"/>
<path d="M1276.500 751.500h3l3.500-3v11l-3.500-3h-3zM1285 750.500c1.500 2 1.500 5 0 7M1287.500 748.500c2.500 3 2.500 8 0 11" fill="none" stroke="#e6e8ec"/>
<text class="b" x="1304" y="757" textLength="48" lengthAdjust="spacingAndGlyphs">2:25 p.m.</text>
<rect x="1361" y="737" width="1" height="31" fill="#4a505b"/>
</svg>
</body></html>
